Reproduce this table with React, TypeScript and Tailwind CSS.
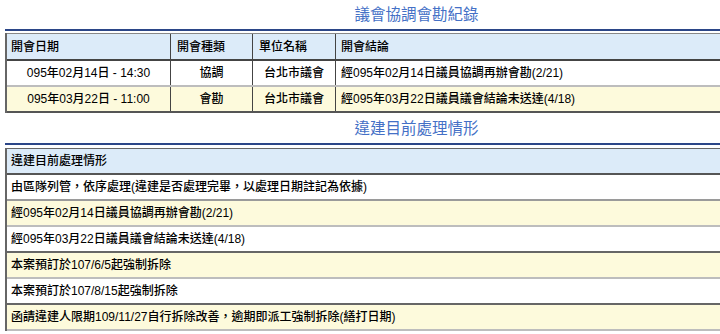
import React from "react";

const FONT = "font-['Liberation_Sans','Noto_Sans_CJK_TC',sans-serif]";

function Title({ text, h }: { text: string; h: string }) {
  return (
    <div className={`${h} flex items-center justify-center`}>
      <span className="text-[15.5px] leading-none font-normal text-[#4470c6] font-['Noto_Sans_CJK_TC',sans-serif]">
        {text}
      </span>
    </div>
  );
}

const meetings = [
  {
    date: "095年02月14日 - 14:30",
    kind: "協調",
    unit: "台北市議會",
    result: "經095年02月14日議員協調再辦會勘(2/21)",
    bg: "bg-white",
    bb: "border-[#bdbdbd]",
  },
  {
    date: "095年03月22日 - 11:00",
    kind: "會勘",
    unit: "台北市議會",
    result: "經095年03月22日議員議會結論未送達(4/18)",
    bg: "bg-[#fdfadc]",
    bb: "border-[#555]",
  },
];

const status = [
  { t: "由區隊列管，依序處理(違建是否處理完畢，以處理日期註記為依據)", bg: "bg-white", bb: "border-[#9a9a9a]" },
  { t: "經095年02月14日議員協調再辦會勘(2/21)", bg: "bg-[#fdfadc]", bb: "border-[#bdbdbd]" },
  { t: "經095年03月22日議員議會結論未送達(4/18)", bg: "bg-white", bb: "border-[#666]" },
  { t: "本案預訂於107/6/5起強制拆除", bg: "bg-[#fdfadc]", bb: "border-[#bdbdbd]" },
  { t: "本案預訂於107/8/15起強制拆除", bg: "bg-white", bb: "border-[#666]" },
  { t: "函請違建人限期109/11/27自行拆除改善，逾期即派工強制拆除(繕打日期)", bg: "bg-[#fdfadc]", bb: "border-[#bdbdbd]" },
];

export default function App() {
  return (
    <div lang="zh-Hant-TW" className={`w-[720px] h-[334px] overflow-hidden bg-white ${FONT}`}>
      <div className="w-[833px] px-[5px] text-[12px] font-medium text-black">
        {/* Section 1 */}
        <Title text="議會協調會勘紀錄" h="h-[27px]" />
        <div className="mt-[2px] h-[2px] bg-[#2b4688]" />
        <div className="mt-[2px] border-l-2 border-[#666]">
          <div className="flex h-[28px] border-t border-b-2 border-t-[#888] border-b-[#444] bg-[#dcebf9]">
            <div className="w-[164px] border-r border-[#444] pl-[4px] flex items-center">開會日期</div>
            <div className="w-[82px] border-r border-[#444] pl-[6px] flex items-center">開會種類</div>
            <div className="w-[83px] border-r border-[#444] pl-[6px] flex items-center">單位名稱</div>
            <div className="flex-1 pl-[5px] flex items-center">開會結論</div>
          </div>
          {meetings.map((m, i) => (
            <div key={i} className={`flex h-[26px] border-b-2 ${m.bb} ${m.bg}`}>
              <div className="w-[164px] border-r border-[#444] flex items-center justify-center">{m.date}</div>
              <div className="w-[82px] border-r border-[#444] flex items-center justify-center">{m.kind}</div>
              <div className="w-[83px] border-r border-[#444] flex items-center justify-center">{m.unit}</div>
              <div className="flex-1 pl-[5px] flex items-center">{m.result}</div>
            </div>
          ))}
        </div>

        {/* Section 2 */}
        <Title text="違建目前處理情形" h="h-[29px]" />
        <div className="mt-[1px] h-[2px] bg-[#2b4688]" />
        <div className="mt-[3px] border-l-2 border-[#666]">
          <div className="flex h-[27px] border-t border-b-2 border-t-[#666] border-b-[#555] bg-[#dcebf9] items-center pl-[4px]">
            違建目前處理情形
          </div>
          {status.map((s, i) => (
            <div key={i} className={`flex h-[26px] items-center pl-[4px] border-b-2 ${s.bb} ${s.bg}`}>
              {s.t}
            </div>
          ))}
        </div>
      </div>
    </div>
  );
}
